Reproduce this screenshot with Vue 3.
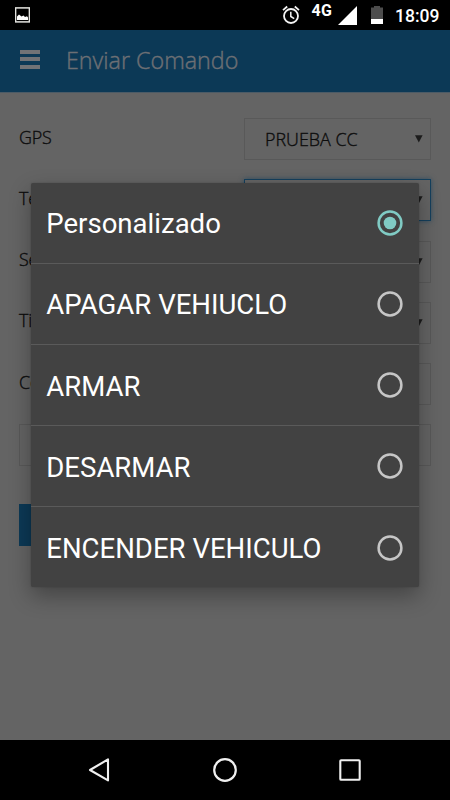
<script setup>
const fields = [
  { label: 'GPS', value: 'PRUEBA CC', arrow: true },
  { label: 'Test', value: '', arrow: true, focus: true },
  { label: 'Sen', value: '', arrow: true },
  { label: 'Tipo', value: '', arrow: true },
  { label: 'Co', value: '', arrow: false },
]
const options = ['Personalizado', 'APAGAR VEHIUCLO', 'ARMAR', 'DESARMAR', 'ENCENDER VEHICULO']
</script>

<template>
  <div class="screen">
    <div class="status">
      <svg class="picture" width="15" height="16" viewBox="0 0 15 16">
        <rect x="0.6" y="0.9" width="13.8" height="14" fill="none" stroke="#e4e4e0" stroke-width="1.5" />
        <path d="M2 13V9.5L4 7.6 6.5 9.4 8.5 8.6 10 10 12 9.3 13 10.5V13Z" fill="#fff" />
      </svg>
      <svg class="alarm" width="18" height="20" viewBox="0 0 18 20" fill="none" stroke="#f4f4f4">
        <circle cx="9" cy="12" r="7" stroke-width="1.8" />
        <path d="M8.8 7.8V12.5L12.2 14.6" stroke-width="1.5" />
        <path d="M1 6.1 5.2 2.5M12.8 2.5 17 6.1" stroke-width="1.8" />
      </svg>
      <span class="network">4G</span>
      <svg class="signal" width="19" height="19" viewBox="0 0 19 19"><path d="M0 19 19 0V19Z" fill="#fff" /></svg>
      <svg class="battery" width="12" height="18" viewBox="0 0 12 18">
        <path d="M0 1.5H3V0H9V1.5H12V13H0Z" fill="#4d4d4d" />
        <path d="M0 13H12V18H0Z" fill="#fff" />
      </svg>
      <span class="clock">18:09</span>
    </div>

    <header class="header">
      <div class="burger"><i></i><i></i><i></i></div>
      <h1>Enviar Comando</h1>
    </header>

    <main class="form">
      <div v-for="f in fields" :key="f.label" class="field">
        <label>{{ f.label }}</label>
        <div class="control" :class="{ focus: f.focus }">
          <span>{{ f.value }}</span>
          <svg v-if="f.arrow" width="8" height="8" viewBox="0 0 8 8"><path d="M0 0.2H7.6L3.8 7.6Z" fill="#1c1c1c" /></svg>
        </div>
      </div>
      <div class="wide"></div>
      <div class="send"></div>
    </main>

    <nav class="nav">
      <svg width="22" height="26" viewBox="0 0 22 26"><path d="M20 2.4V23.4L2 13Z" fill="none" stroke="#f0f0f0" stroke-width="2.1" stroke-linejoin="round" /></svg>
      <svg width="26" height="26" viewBox="0 0 26 26"><circle cx="13" cy="13" r="10.8" fill="none" stroke="#f0f0f0" stroke-width="2.2" /></svg>
      <svg width="26" height="26" viewBox="0 0 26 26"><rect x="3.3" y="3.3" width="19.4" height="19.4" rx="0.8" fill="none" stroke="#f0f0f0" stroke-width="2.1" /></svg>
    </nav>

    <div class="dialog">
      <div v-for="(o, i) in options" :key="o" class="option">
        <span>{{ o }}</span>
        <svg width="26" height="26" viewBox="0 0 26 26">
          <circle cx="13" cy="13" r="11.4" fill="none" :stroke="i === 0 ? '#80cbc4' : '#c6c6c6'" stroke-width="2.5" />
          <circle v-if="i === 0" cx="13" cy="13" r="6.3" fill="#80cbc4" />
        </svg>
      </div>
    </div>
  </div>
</template>

<style>
body { margin: 0; background: #000; }
</style>

<style scoped>
.screen { position: relative; width: 450px; height: 800px; background: #646464; overflow: hidden; display: flex; flex-direction: column; box-sizing: border-box; }
.status { height: 30px; flex: none; background: #000; color: #fff; display: flex; align-items: flex-start; font-family: Roboto, sans-serif; box-sizing: border-box; padding-left: 15px; }
.picture { margin-top: 7px; }
.alarm { margin: 4px 0 0 252px; }
.network { margin-left: 11.5px; width: 22px; font-size: 16px; line-height: 18px; margin-top: 2px; font-weight: 700; letter-spacing: 0.3px; white-space: nowrap; }
.signal { margin: 6px 0 0 4px; }
.battery { margin: 6px 0 0 14px; }
.clock { margin-left: 12.5px; font-size: 17.5px; line-height: 30px; font-weight: 500; padding-top: 1px; }
.header { height: 63px; flex: none; background: #0c3956; border-bottom: 1px solid #4c5b66; box-sizing: border-box; display: flex; align-items: center; padding-left: 20px; gap: 26.5px; }
.burger { display: flex; flex-direction: column; gap: 3.5px; margin-top: -4px; }
.burger i { width: 19.5px; height: 4px; background: #717376; }
h1 { margin: -2px 0 0; font: 300 23.3px/30px "Open Sans", sans-serif; -webkit-text-stroke: 0.4px #6c6f74; color: #6c6f74; white-space: nowrap; }
.form { flex: 1; padding: 25px 19px 0; font: 300 17.9px/24px "Open Sans", sans-serif; -webkit-text-stroke: 0.35px #0c0c0c; color: #0c0c0c; }
.field { height: 61.3px; display: flex; justify-content: space-between; }
.field label { padding-top: 6.6px; letter-spacing: -0.2px; }
.control { width: 187px; height: 42px; border: 1px solid #595959; box-sizing: border-box; display: flex; justify-content: space-between; align-items: center; padding: 0 7px 0 20px; }
.control span { margin-top: -1px; }
.control.focus { border-color: #143f5c; box-shadow: 0 0 5px #304f64; }
.wide { height: 42px; border: 1px solid #595959; box-sizing: border-box; }
.send { height: 42px; width: 187px; margin-top: 37.5px; background: #0c3956; }
.nav { height: 60px; flex: none; background: #000; display: flex; align-items: center; justify-content: space-between; padding: 0 87px 0 88px; }
.nav svg:nth-child(2) { margin-left: 2px; }
.dialog { position: absolute; left: 31px; top: 182.5px; width: 388px; height: 404.5px; background: #424242; border-radius: 2px; box-shadow: 0 9px 22px rgba(0, 0, 0, 0.32), 0 0 2px rgba(0, 0, 0, 0.2); display: grid; grid-template-rows: repeat(4, 81.2px) 1fr; }
.option { display: flex; align-items: center; justify-content: space-between; box-sizing: border-box; padding: 0.6px 16px 0 15.3px; border-bottom: 1.5px solid #5a5a5a; font: 400 27.55px/36px Roboto, sans-serif; color: #fff; white-space: nowrap; }
.option span { padding-top: 2.6px; }
.option:last-child { border-bottom: 0; padding-top: 1.2px; }
</style>
